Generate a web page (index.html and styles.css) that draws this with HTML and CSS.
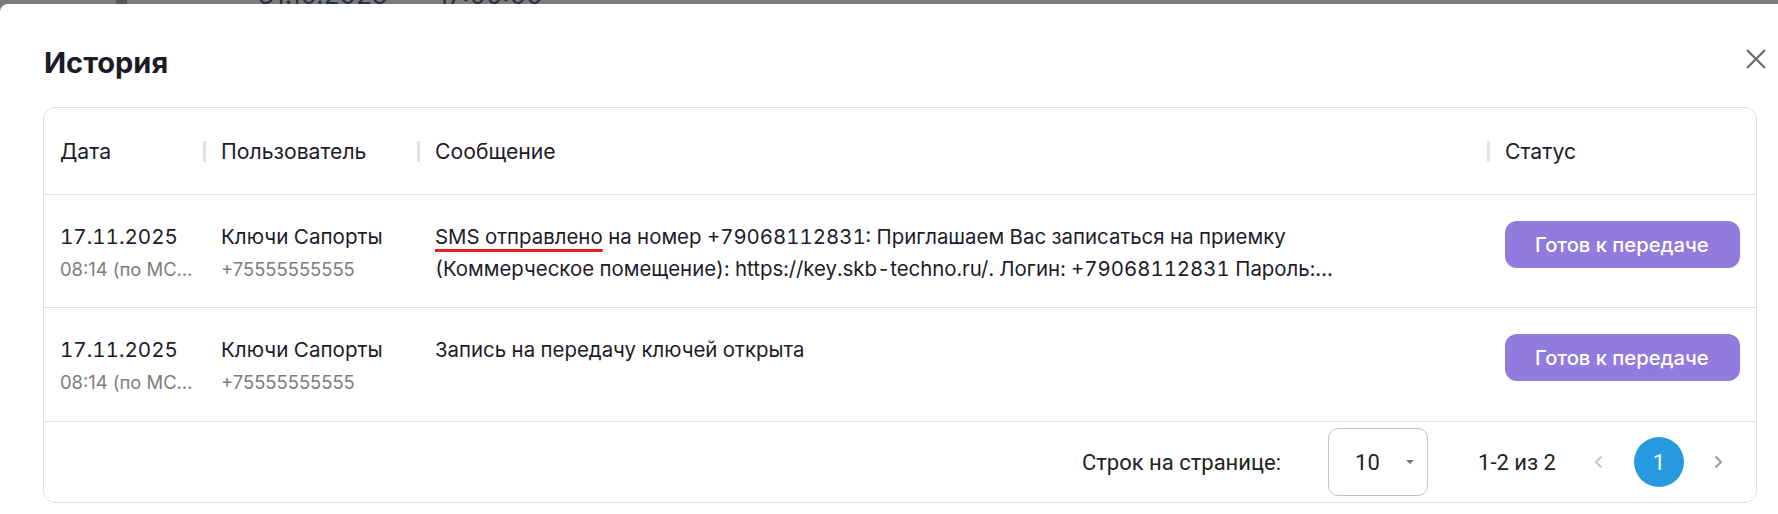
FILE: index.html
```html
<!DOCTYPE html>
<html lang="ru">
<head>
<meta charset="utf-8">
<title>История</title>
<link rel="stylesheet" href="styles.css">
</head>
<body>
<div class="backdrop">
  <span class="bd-mark"></span>
  <span class="bd-text bd-t1">31.10.2025</span>
  <span class="bd-text bd-t2">17:00:00</span>
</div>
<div class="modal">
  <div class="modal-head">
    <h1 class="modal-title">История</h1>
    <button class="close-btn" aria-label="Закрыть">
      <svg width="22" height="22" viewBox="0 0 22 22"><path d="M2 2 L20 20 M20 2 L2 20" stroke="#6b6b6b" stroke-width="2.2" stroke-linecap="butt" fill="none"/></svg>
    </button>
  </div>
  <div class="card">
    <div class="grid head-row">
      <div class="hcell first">Дата</div>
      <div class="hcell"><span class="sep"></span>Пользователь</div>
      <div class="hcell"><span class="sep"></span>Сообщение</div>
      <div class="hcell"><span class="sep"></span>Статус</div>
    </div>
    <div class="grid body-row">
      <div class="cell first">
        <div class="main">17.11.2025</div>
        <div class="sub ellipsis">08:14 (по МСК)</div>
      </div>
      <div class="cell">
        <div class="main">Ключи Сапорты</div>
        <div class="sub">+75555555555</div>
      </div>
      <div class="cell">
        <div class="msg"><span class="mark">SMS отправлено</span> на номер +79068112831: Приглашаем Вас записаться на приемку (Коммерческое помещение): https://key.skb-techno.ru/. Логин: +79068112831 Пароль: Kx7mQ2pL9wRt4vN8 Ссылка действительна 7 дней</div>
      </div>
      <div class="cell">
        <button class="status-btn">Готов к передаче</button>
      </div>
    </div>
    <div class="grid body-row">
      <div class="cell first">
        <div class="main">17.11.2025</div>
        <div class="sub ellipsis">08:14 (по МСК)</div>
      </div>
      <div class="cell">
        <div class="main">Ключи Сапорты</div>
        <div class="sub">+75555555555</div>
      </div>
      <div class="cell">
        <div class="msg">Запись на передачу ключей открыта</div>
      </div>
      <div class="cell">
        <button class="status-btn">Готов к передаче</button>
      </div>
    </div>
    <div class="footer">
      <span class="rows-label">Строк на странице:</span>
      <div class="select">
        <span class="select-val">10</span>
        <span class="caret"></span>
      </div>
      <span class="range">1-2 из 2</span>
      <span class="nav nav-prev">
        <svg width="11" height="14" viewBox="0 0 11 14"><path d="M8.5 1.5 L3 7 L8.5 12.5" stroke="#c4c4c4" stroke-width="2" fill="none"/></svg>
      </span>
      <span class="page">1</span>
      <span class="nav nav-next">
        <svg width="11" height="14" viewBox="0 0 11 14"><path d="M2.5 1.5 L8 7 L2.5 12.5" stroke="#9e9e9e" stroke-width="2" fill="none"/></svg>
      </span>
    </div>
  </div>
</div>
</body>
</html>
```

FILE: styles.css
```css
* { box-sizing: border-box; }

html, body {
  margin: 0;
  padding: 0;
  height: 100%;
}

body {
  background: #7b7b7b;
  font-family: Inter, "Noto Sans", sans-serif;
  color: #1e1c2a;
  overflow: hidden;
}

.backdrop {
  height: 4px;
  overflow: hidden;
  display: flex;
  align-items: flex-end;
}

.bd-mark {
  width: 11px;
  height: 4px;
  margin-left: 116px;
  background: #555;
}

.bd-text {
  font-size: 26px;
  line-height: 26px;
  color: #26313d;
  margin-bottom: -4px;
}

.bd-t1 { margin-left: 131px; }
.bd-t2 { margin-left: 50px; }

.modal {
  background: #fff;
  border-top-left-radius: 8px;
  height: 510px;
}

.modal-head {
  display: flex;
  justify-content: space-between;
  align-items: flex-start;
  padding: 41px 11px 0 44px;
}

.modal-title {
  margin: 0;
  font-size: 29px;
  line-height: 36px;
  font-weight: 700;
  color: #1c1a27;
}

.close-btn {
  margin-top: 3px;
  padding: 0;
  border: 0;
  background: none;
  width: 22px;
  height: 22px;
  display: flex;
}

.card {
  margin: 26px 21px 0 43px;
  border: 1px solid #e0e0e0;
  border-radius: 12px;
  overflow: hidden;
}

.grid {
  display: grid;
  grid-template-columns: 159px 214px 1fr 269px;
  border-bottom: 1px solid #e0e0e0;
}

.head-row {
  height: 87px;
}

.hcell {
  display: flex;
  align-items: center;
  font-size: 21.2px;
  line-height: 32px;
  color: #1e1c2a;
}

.hcell.first { padding-left: 16px; }

.sep {
  width: 3px;
  height: 21px;
  background: #e2e2e2;
  margin-right: 15px;
}

.body-row {
  padding: 26px 0 22px;
}

.body-row:nth-of-type(3) {
  padding-bottom: 23px;
}

.cell {
  padding: 0 16px 0 18px;
  min-width: 0;
}

.cell.first { padding-left: 16px; padding-right: 9px; }

.main {
  font-size: 20.6px;
  line-height: 32px;
  color: #1e1c2a;
  white-space: nowrap;
  font-variant-numeric: tabular-nums;
}

.sub {
  font-size: 18.4px;
  line-height: 32px;
  color: #7d7d7d;
  white-space: nowrap;
}

.ellipsis {
  overflow: hidden;
  text-overflow: ellipsis;
}

.msg {
  font-size: 20.4px;
  line-height: 32px;
  color: #1e1c2a;
  max-width: 960px;
  display: -webkit-box;
  -webkit-line-clamp: 2;
  -webkit-box-orient: vertical;
  overflow: hidden;
  font-variant-numeric: tabular-nums;
}

.mark {
  text-decoration-line: underline;
  text-decoration-color: #e3211f;
  text-decoration-thickness: 3px;
  text-underline-offset: 5px;
}

.status-btn {
  height: 47px;
  padding: 0 31px 0 30px;
  border: 0;
  border-radius: 12px;
  background: #8f7cdc;
  color: #fff;
  font-family: Inter, "Noto Sans", sans-serif;
  font-size: 20.2px;
  font-weight: 500;
}

.footer {
  height: 80px;
  display: flex;
  align-items: center;
  justify-content: flex-end;
  padding-right: 32px;
  font-family: Roboto, "Noto Sans", sans-serif;
  font-size: 22px;
  color: #222;
}

.rows-label { margin-right: 47px; }

.select {
  width: 100px;
  height: 68px;
  border: 1px solid #c4c4c4;
  border-radius: 10px;
  display: flex;
  align-items: center;
  padding-left: 26px;
}

.select-val { width: 51px; }

.caret {
  width: 0;
  height: 0;
  border-left: 4px solid transparent;
  border-right: 4px solid transparent;
  border-top: 4px solid #757575;
}

.range { margin-left: 50px; }

.nav {
  display: flex;
  width: 11px;
  height: 14px;
}

.nav-prev { margin-left: 37px; }

.page {
  width: 50px;
  height: 50px;
  border-radius: 50%;
  background: #279adf;
  color: #fff;
  display: flex;
  align-items: center;
  justify-content: center;
  margin-left: 30px;
  margin-right: 29px;
}
```
